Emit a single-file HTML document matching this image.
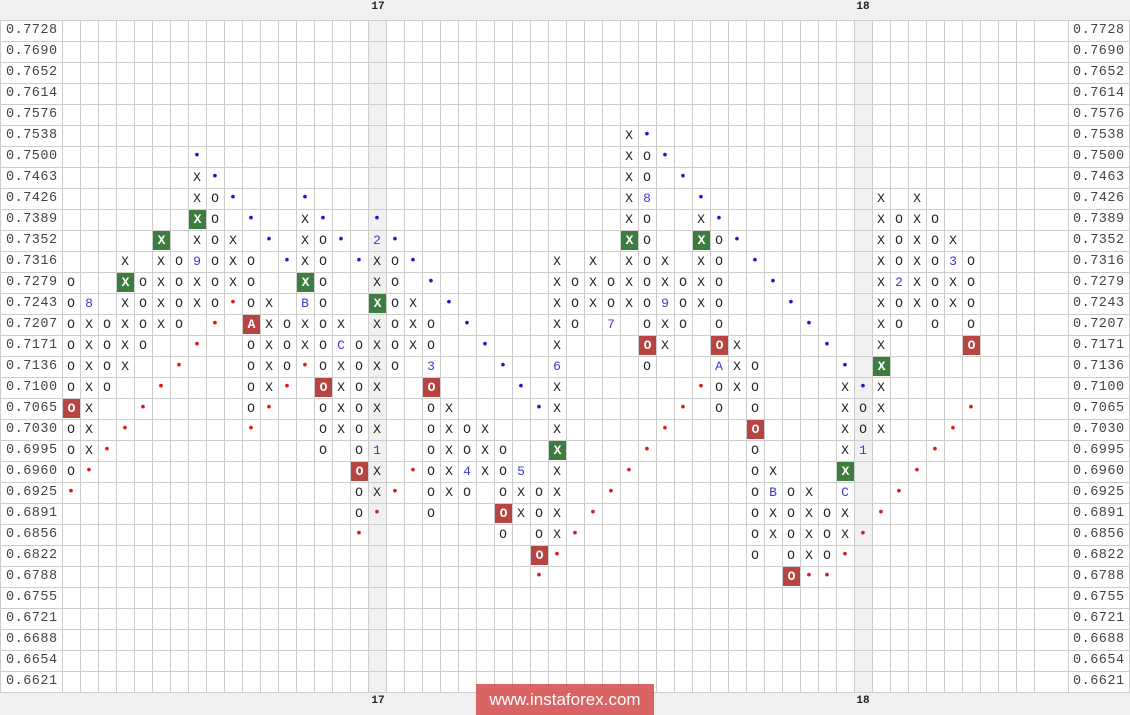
<!DOCTYPE html>
<html><head><meta charset="utf-8"><style>
*{margin:0;padding:0;box-sizing:border-box}
body{width:1130px;height:715px;overflow:hidden;background:#fff;position:relative;font-family:"Liberation Mono",monospace}
.top,.bot{position:absolute;left:0;width:1130px;background:#f0f0f0}
.top{top:0;height:20px}
.bot{top:692px;height:23px}
.hl{position:absolute;left:0;top:20px;width:1130px;height:673px;background-image:linear-gradient(#ccc 1px,transparent 1px);background-size:100% 21px}
.vl{position:absolute;left:62px;top:20px;width:973px;height:672px;background-image:linear-gradient(to right,#ccc 1px,transparent 1px);background-size:18px 100%}
.sh{position:absolute;top:20px;height:672px;width:18px;background:#f0f0f0}
.vline{position:absolute;top:20px;height:672px;width:1px;background:#ccc}
.ax{position:absolute;font-size:13.5px;color:#444;letter-spacing:0.5px;line-height:21px}
.ax div{height:21px}
.dl{position:absolute;font-size:11px;font-weight:bold;color:#222;width:30px;text-align:center}
.rw{position:absolute;left:0;height:21px;width:1130px}
.rw i{position:absolute;top:0;width:18px;height:21px;line-height:21px;text-align:center;font-style:normal;font-size:13px;color:#222}
.rw i.g{background:#3f7c3f;color:#fff;font-weight:bold;top:1px;height:19px;line-height:19px;margin-left:1px;width:17px}
.rw i.d{background:#b64441;color:#fff;font-weight:bold;top:1px;height:19px;line-height:19px;margin-left:1px;width:17px}
.rw i.r{color:#e01818;font-size:14px}
.rw i.b{color:#1c1cc8;font-size:14px}
.rw i.l{color:#3a3ad0}
.c0{left:62px}.c1{left:80px}.c2{left:98px}.c3{left:116px}.c4{left:134px}.c5{left:152px}.c6{left:170px}.c7{left:188px}.c8{left:206px}.c9{left:224px}.c10{left:242px}.c11{left:260px}.c12{left:278px}.c13{left:296px}.c14{left:314px}.c15{left:332px}.c16{left:350px}.c17{left:368px}.c18{left:386px}.c19{left:404px}.c20{left:422px}.c21{left:440px}.c22{left:458px}.c23{left:476px}.c24{left:494px}.c25{left:512px}.c26{left:530px}.c27{left:548px}.c28{left:566px}.c29{left:584px}.c30{left:602px}.c31{left:620px}.c32{left:638px}.c33{left:656px}.c34{left:674px}.c35{left:692px}.c36{left:710px}.c37{left:728px}.c38{left:746px}.c39{left:764px}.c40{left:782px}.c41{left:800px}.c42{left:818px}.c43{left:836px}.c44{left:854px}.c45{left:872px}.c46{left:890px}.c47{left:908px}.c48{left:926px}.c49{left:944px}.c50{left:962px}
.wm{position:absolute;left:476px;top:684px;width:178px;height:31px;background:rgba(214,80,78,0.88);color:#fff;font-family:"Liberation Sans",sans-serif;font-size:17px;line-height:31px;text-align:center}
</style></head><body>
<div class="top"></div>
<div class="bot"></div>
<div class="sh" style="left:368px"></div>
<div class="sh" style="left:854px"></div>
<div class="hl"></div>
<div class="vl"></div>
<div class="vline" style="left:1068px"></div>
<div class="vline" style="left:0"></div>
<div class="vline" style="left:1129px"></div>
<div class="dl" style="left:363px;top:1px">17</div>
<div class="dl" style="left:848px;top:1px">18</div>
<div class="dl" style="left:363px;top:695px">17</div>
<div class="dl" style="left:848px;top:695px">18</div>
<div class="ax" style="left:6px;top:20px">
<div>0.7728</div><div>0.7690</div><div>0.7652</div><div>0.7614</div><div>0.7576</div><div>0.7538</div><div>0.7500</div><div>0.7463</div><div>0.7426</div><div>0.7389</div><div>0.7352</div><div>0.7316</div><div>0.7279</div><div>0.7243</div><div>0.7207</div><div>0.7171</div><div>0.7136</div><div>0.7100</div><div>0.7065</div><div>0.7030</div><div>0.6995</div><div>0.6960</div><div>0.6925</div><div>0.6891</div><div>0.6856</div><div>0.6822</div><div>0.6788</div><div>0.6755</div><div>0.6721</div><div>0.6688</div><div>0.6654</div><div>0.6621</div></div>
<div class="ax" style="left:1073px;top:20px">
<div>0.7728</div><div>0.7690</div><div>0.7652</div><div>0.7614</div><div>0.7576</div><div>0.7538</div><div>0.7500</div><div>0.7463</div><div>0.7426</div><div>0.7389</div><div>0.7352</div><div>0.7316</div><div>0.7279</div><div>0.7243</div><div>0.7207</div><div>0.7171</div><div>0.7136</div><div>0.7100</div><div>0.7065</div><div>0.7030</div><div>0.6995</div><div>0.6960</div><div>0.6925</div><div>0.6891</div><div>0.6856</div><div>0.6822</div><div>0.6788</div><div>0.6755</div><div>0.6721</div><div>0.6688</div><div>0.6654</div><div>0.6621</div></div>

<div class="rw" style="top:125px"><i class="c31">X</i><i class="c32 b">•</i></div>
<div class="rw" style="top:146px"><i class="c7 b">•</i><i class="c31">X</i><i class="c32">O</i><i class="c33 b">•</i></div>
<div class="rw" style="top:167px"><i class="c7">X</i><i class="c8 b">•</i><i class="c31">X</i><i class="c32">O</i><i class="c34 b">•</i></div>
<div class="rw" style="top:188px"><i class="c7">X</i><i class="c8">O</i><i class="c9 b">•</i><i class="c13 b">•</i><i class="c31">X</i><i class="c32 l">8</i><i class="c35 b">•</i><i class="c45">X</i><i class="c47">X</i></div>
<div class="rw" style="top:209px"><i class="c7 g">X</i><i class="c8">O</i><i class="c10 b">•</i><i class="c13">X</i><i class="c14 b">•</i><i class="c17 b">•</i><i class="c31">X</i><i class="c32">O</i><i class="c35">X</i><i class="c36 b">•</i><i class="c45">X</i><i class="c46">O</i><i class="c47">X</i><i class="c48">O</i></div>
<div class="rw" style="top:230px"><i class="c5 g">X</i><i class="c7">X</i><i class="c8">O</i><i class="c9">X</i><i class="c11 b">•</i><i class="c13">X</i><i class="c14">O</i><i class="c15 b">•</i><i class="c17 l">2</i><i class="c18 b">•</i><i class="c31 g">X</i><i class="c32">O</i><i class="c35 g">X</i><i class="c36">O</i><i class="c37 b">•</i><i class="c45">X</i><i class="c46">O</i><i class="c47">X</i><i class="c48">O</i><i class="c49">X</i></div>
<div class="rw" style="top:251px"><i class="c3">X</i><i class="c5">X</i><i class="c6">O</i><i class="c7 l">9</i><i class="c8">O</i><i class="c9">X</i><i class="c10">O</i><i class="c12 b">•</i><i class="c13">X</i><i class="c14">O</i><i class="c16 b">•</i><i class="c17">X</i><i class="c18">O</i><i class="c19 b">•</i><i class="c27">X</i><i class="c29">X</i><i class="c31">X</i><i class="c32">O</i><i class="c33">X</i><i class="c35">X</i><i class="c36">O</i><i class="c38 b">•</i><i class="c45">X</i><i class="c46">O</i><i class="c47">X</i><i class="c48">O</i><i class="c49 l">3</i><i class="c50">O</i></div>
<div class="rw" style="top:272px"><i class="c0">O</i><i class="c3 g">X</i><i class="c4">O</i><i class="c5">X</i><i class="c6">O</i><i class="c7">X</i><i class="c8">O</i><i class="c9">X</i><i class="c10">O</i><i class="c13 g">X</i><i class="c14">O</i><i class="c17">X</i><i class="c18">O</i><i class="c20 b">•</i><i class="c27">X</i><i class="c28">O</i><i class="c29">X</i><i class="c30">O</i><i class="c31">X</i><i class="c32">O</i><i class="c33">X</i><i class="c34">O</i><i class="c35">X</i><i class="c36">O</i><i class="c39 b">•</i><i class="c45">X</i><i class="c46 l">2</i><i class="c47">X</i><i class="c48">O</i><i class="c49">X</i><i class="c50">O</i></div>
<div class="rw" style="top:293px"><i class="c0">O</i><i class="c1 l">8</i><i class="c3">X</i><i class="c4">O</i><i class="c5">X</i><i class="c6">O</i><i class="c7">X</i><i class="c8">O</i><i class="c9 r">•</i><i class="c10">O</i><i class="c11">X</i><i class="c13 l">B</i><i class="c14">O</i><i class="c17 g">X</i><i class="c18">O</i><i class="c19">X</i><i class="c21 b">•</i><i class="c27">X</i><i class="c28">O</i><i class="c29">X</i><i class="c30">O</i><i class="c31">X</i><i class="c32">O</i><i class="c33 l">9</i><i class="c34">O</i><i class="c35">X</i><i class="c36">O</i><i class="c40 b">•</i><i class="c45">X</i><i class="c46">O</i><i class="c47">X</i><i class="c48">O</i><i class="c49">X</i><i class="c50">O</i></div>
<div class="rw" style="top:314px"><i class="c0">O</i><i class="c1">X</i><i class="c2">O</i><i class="c3">X</i><i class="c4">O</i><i class="c5">X</i><i class="c6">O</i><i class="c8 r">•</i><i class="c10 d">A</i><i class="c11">X</i><i class="c12">O</i><i class="c13">X</i><i class="c14">O</i><i class="c15">X</i><i class="c17">X</i><i class="c18">O</i><i class="c19">X</i><i class="c20">O</i><i class="c22 b">•</i><i class="c27">X</i><i class="c28">O</i><i class="c30 l">7</i><i class="c32">O</i><i class="c33">X</i><i class="c34">O</i><i class="c36">O</i><i class="c41 b">•</i><i class="c45">X</i><i class="c46">O</i><i class="c48">O</i><i class="c50">O</i></div>
<div class="rw" style="top:335px"><i class="c0">O</i><i class="c1">X</i><i class="c2">O</i><i class="c3">X</i><i class="c4">O</i><i class="c7 r">•</i><i class="c10">O</i><i class="c11">X</i><i class="c12">O</i><i class="c13">X</i><i class="c14">O</i><i class="c15 l">C</i><i class="c16">O</i><i class="c17">X</i><i class="c18">O</i><i class="c19">X</i><i class="c20">O</i><i class="c23 b">•</i><i class="c27">X</i><i class="c32 d">O</i><i class="c33">X</i><i class="c36 d">O</i><i class="c37">X</i><i class="c42 b">•</i><i class="c45">X</i><i class="c50 d">O</i></div>
<div class="rw" style="top:356px"><i class="c0">O</i><i class="c1">X</i><i class="c2">O</i><i class="c3">X</i><i class="c6 r">•</i><i class="c10">O</i><i class="c11">X</i><i class="c12">O</i><i class="c13 r">•</i><i class="c14">O</i><i class="c15">X</i><i class="c16">O</i><i class="c17">X</i><i class="c18">O</i><i class="c20 l">3</i><i class="c24 b">•</i><i class="c27 l">6</i><i class="c32">O</i><i class="c36 l">A</i><i class="c37">X</i><i class="c38">O</i><i class="c43 b">•</i><i class="c45 g">X</i></div>
<div class="rw" style="top:377px"><i class="c0">O</i><i class="c1">X</i><i class="c2">O</i><i class="c5 r">•</i><i class="c10">O</i><i class="c11">X</i><i class="c12 r">•</i><i class="c14 d">O</i><i class="c15">X</i><i class="c16">O</i><i class="c17">X</i><i class="c20 d">O</i><i class="c25 b">•</i><i class="c27">X</i><i class="c35 r">•</i><i class="c36">O</i><i class="c37">X</i><i class="c38">O</i><i class="c43">X</i><i class="c44 b">•</i><i class="c45">X</i></div>
<div class="rw" style="top:398px"><i class="c0 d">O</i><i class="c1">X</i><i class="c4 r">•</i><i class="c10">O</i><i class="c11 r">•</i><i class="c14">O</i><i class="c15">X</i><i class="c16">O</i><i class="c17">X</i><i class="c20">O</i><i class="c21">X</i><i class="c26 b">•</i><i class="c27">X</i><i class="c34 r">•</i><i class="c36">O</i><i class="c38">O</i><i class="c43">X</i><i class="c44">O</i><i class="c45">X</i><i class="c50 r">•</i></div>
<div class="rw" style="top:419px"><i class="c0">O</i><i class="c1">X</i><i class="c3 r">•</i><i class="c10 r">•</i><i class="c14">O</i><i class="c15">X</i><i class="c16">O</i><i class="c17">X</i><i class="c20">O</i><i class="c21">X</i><i class="c22">O</i><i class="c23">X</i><i class="c27">X</i><i class="c33 r">•</i><i class="c38 d">O</i><i class="c43">X</i><i class="c44">O</i><i class="c45">X</i><i class="c49 r">•</i></div>
<div class="rw" style="top:440px"><i class="c0">O</i><i class="c1">X</i><i class="c2 r">•</i><i class="c14">O</i><i class="c16">O</i><i class="c17 l">1</i><i class="c20">O</i><i class="c21">X</i><i class="c22">O</i><i class="c23">X</i><i class="c24">O</i><i class="c27 g">X</i><i class="c32 r">•</i><i class="c38">O</i><i class="c43">X</i><i class="c44 l">1</i><i class="c48 r">•</i></div>
<div class="rw" style="top:461px"><i class="c0">O</i><i class="c1 r">•</i><i class="c16 d">O</i><i class="c17">X</i><i class="c19 r">•</i><i class="c20">O</i><i class="c21">X</i><i class="c22 l">4</i><i class="c23">X</i><i class="c24">O</i><i class="c25 l">5</i><i class="c27">X</i><i class="c31 r">•</i><i class="c38">O</i><i class="c39">X</i><i class="c43 g">X</i><i class="c47 r">•</i></div>
<div class="rw" style="top:482px"><i class="c0 r">•</i><i class="c16">O</i><i class="c17">X</i><i class="c18 r">•</i><i class="c20">O</i><i class="c21">X</i><i class="c22">O</i><i class="c24">O</i><i class="c25">X</i><i class="c26">O</i><i class="c27">X</i><i class="c30 r">•</i><i class="c38">O</i><i class="c39 l">B</i><i class="c40">O</i><i class="c41">X</i><i class="c43 l">C</i><i class="c46 r">•</i></div>
<div class="rw" style="top:503px"><i class="c16">O</i><i class="c17 r">•</i><i class="c20">O</i><i class="c24 d">O</i><i class="c25">X</i><i class="c26">O</i><i class="c27">X</i><i class="c29 r">•</i><i class="c38">O</i><i class="c39">X</i><i class="c40">O</i><i class="c41">X</i><i class="c42">O</i><i class="c43">X</i><i class="c45 r">•</i></div>
<div class="rw" style="top:524px"><i class="c16 r">•</i><i class="c24">O</i><i class="c26">O</i><i class="c27">X</i><i class="c28 r">•</i><i class="c38">O</i><i class="c39">X</i><i class="c40">O</i><i class="c41">X</i><i class="c42">O</i><i class="c43">X</i><i class="c44 r">•</i></div>
<div class="rw" style="top:545px"><i class="c26 d">O</i><i class="c27 r">•</i><i class="c38">O</i><i class="c40">O</i><i class="c41">X</i><i class="c42">O</i><i class="c43 r">•</i></div>
<div class="rw" style="top:566px"><i class="c26 r">•</i><i class="c40 d">O</i><i class="c41 r">•</i><i class="c42 r">•</i></div>

<div class="wm">www.instaforex.com</div>
</body></html>
